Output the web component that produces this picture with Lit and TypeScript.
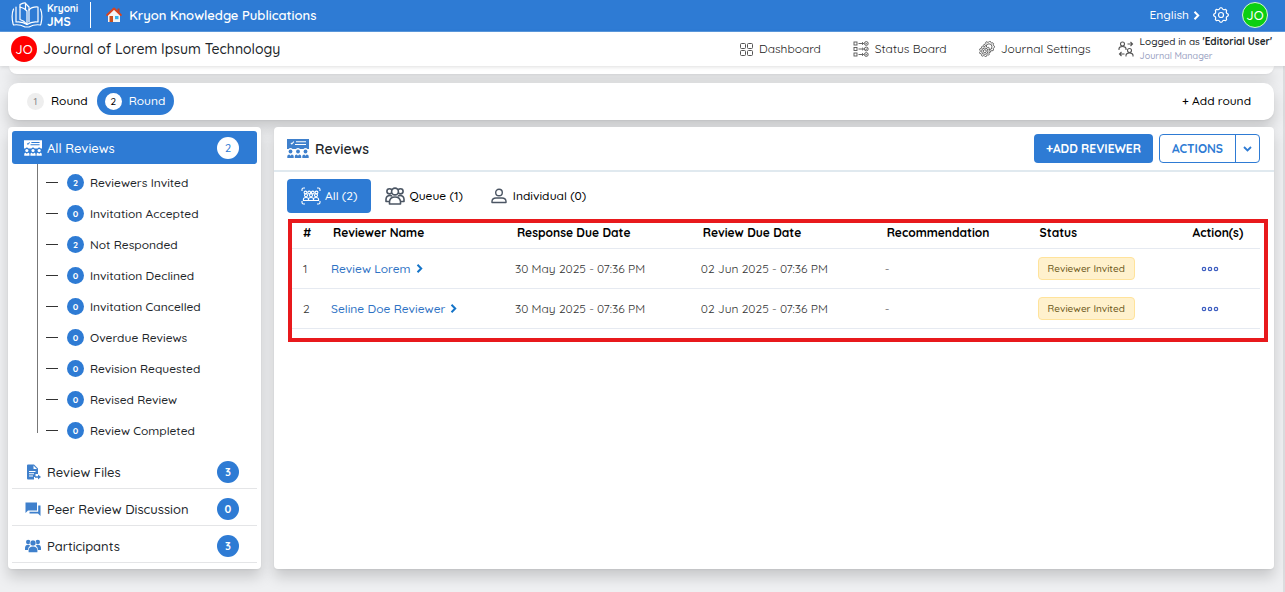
import { LitElement, html, css, svg } from "lit";
import { customElement } from "lit/decorators.js";
import { classMap } from "lit/directives/class-map.js";

/* ---------- icons ---------- */

const reviewBoard = (cls: string) => html`<svg class=${cls} viewBox="0 0 22 19" fill="currentColor" aria-hidden="true">
  <path fill-rule="evenodd" d="M0 0h22v10h-1.500a2.600 2.600 0 0 0-4 0h-3.500a2.600 2.600 0 0 0-4 0H5.500a2.600 2.600 0 0 0-4 0H0zM3.500 4.200l1.300 1.500 2.400-2.700-.8-.7-1.600 1.900-.5-.7zM9 2.200v1.100h10V2.200zM8 5v1.100h11V5z"/>
  ${[3.5, 11, 18.5].map((x) => svg`<circle cx=${x} cy="12.500" r="1.900"/><path d=${`M${x - 3.2} 19v-1.800q0-1.800 2-1.800l1.200 1.300 1.200-1.300q2 0 2 1.800V19z`}/>`)}
</svg>`;

const gearPath = (cx: number, cy: number, r: number, teeth = 8) => {
  const pts: string[] = [];
  for (let i = 0; i < teeth * 4; i++) {
    const a = ((i - 0.5) / (teeth * 4)) * Math.PI * 2;
    const q = i % 4 < 2 ? r : r * 0.82;
    pts.push(`${(cx + q * Math.cos(a)).toFixed(2)} ${(cy + q * Math.sin(a)).toFixed(2)}`);
  }
  return `M${pts.join("L")}Z`;
};

const gearIcon = html`<svg class="i16" viewBox="0 0 16 16" fill="none" stroke="currentColor" stroke-width="1.200" stroke-linejoin="round" aria-hidden="true">
  <path d=${gearPath(8, 8, 7.3)} /><circle cx="8" cy="8" r="2.500" /></svg>`;

const gearsIcon = html`<svg class="i16" viewBox="0 0 16 16" fill="none" stroke="currentColor" stroke-width="0.900" stroke-linejoin="round" aria-hidden="true">
  <path d=${gearPath(10, 5.8, 5.6, 9)} /><circle cx="10" cy="5.800" r="3" />
  <path fill="#fff" d=${gearPath(5.8, 10.2, 5.5, 9)} /><circle cx="5.800" cy="10.200" r="3.200" /><circle cx="5.800" cy="10.200" r="1.500" /></svg>`;

const chevron = html`<svg class="chev" viewBox="0 0 7 9" fill="none" stroke="currentColor" stroke-width="2" aria-hidden="true"><path d="M1.500 .8L5.200 4.500 1.500 8.200" /></svg>`;

const caret = html`<svg class="caret" viewBox="0 0 9 6" fill="none" stroke="currentColor" stroke-width="1.800" aria-hidden="true"><path d="M1 1l3.500 3.500L8 1" /></svg>`;

const bookIcon = html`<svg class="logo" viewBox="0 0 32 26" fill="none" stroke="currentColor" stroke-width="1.200" stroke-linejoin="round" stroke-linecap="round" aria-hidden="true">
  <path d="M5 5v15q6-1 11 2.500Q21 19 27 20V5q-6-.5-9 3" /><path d="M16 22.500V9Q13.500 6 9 5v12.500q4 1 7 5" />
  <path d="M9 5V2.500q3.500-2 5.500-1.500v6.300" /><path d="M18 20V5l-3.500-3.500" />
  <path d="M2.500 7Q0 13 2 21.500l.5 1.500q6-1 11.500 2h4q5.500-3 11.500-2l.5-1.500Q32 13 29.500 7" /></svg>`;

const houseIcon = html`<svg class="i16" viewBox="0 0 16 16" aria-hidden="true">
  <path fill="#f4f4f4" d="M2 7.500L8 2l6 5.500V15H2z" /><path fill="#c9401c" d="M11.500 1.500h2v4h-2z" />
  <path fill="none" stroke="#d9431e" stroke-width="2" stroke-linejoin="round" stroke-linecap="round" d="M1.200 8L8 1.600 14.800 8" />
  <path fill="#c8501e" d="M3.500 9h3.500v6H3.500z" /><path fill="#35b3ea" d="M9 9h3.500v3.200H9z" /></svg>`;

const dashboardIcon = html`<svg class="i13" viewBox="0 0 13 13" fill="none" stroke="currentColor" aria-hidden="true">
  ${[0.5, 7.5].flatMap((x) => [0.5, 7.5].map((y) => svg`<rect x=${x} y=${y} width="5" height="5" rx="1"/>`))}</svg>`;

const statusIcon = html`<svg class="i16" viewBox="0 0 16 16" fill="none" stroke="currentColor" stroke-width="0.900" aria-hidden="true">
  ${[2.5, 8, 13.5].map((y) => svg`<rect x="1" y=${y - 1.5} width="3" height="3"/><path d=${`M5.500 ${y}h5M9 ${y - 1.3}l1.500 1.300L9 ${y + 1.3}`}/><circle cx="13.300" cy=${y} r="1.900"/><path d=${`M12.500 ${y}l.7.7 1-1.400`}/>`)}</svg>`;

const switchIcon = html`<svg class="i16" viewBox="0 0 16 16" fill="none" stroke="currentColor" stroke-width="1.100" aria-hidden="true">
  <circle cx="4.500" cy="3" r="2" /><path d="M1 9V7.500q.5-2 3.500-2t3.500 2V9M9.500 3h5M12.500 1l2 2-2 2" />
  <circle cx="11.500" cy="9.500" r="2" /><path d="M8 15.500V14q.5-2 3.500-2t3.500 2v1.500M6.500 13h-5M3.500 11l-2 2 2 2" /></svg>`;

const fileIcon = html`<svg class="i16" viewBox="0 0 16 16" fill="currentColor" aria-hidden="true">
  <path fill-rule="evenodd" d="M2 1.500Q2 .5 3 .5h6L13 4.500V10h-2.500v3H9v2.500H3q-1 0-1-1zM8.500 1.500V5H12zM4 7v1h6.500V7zM4 9.300v1h5v-1zM4 11.600v1h4v-1z" />
  <path d="M10 12.300h3V10.500l3 2.500-3 2.500v-1.800h-3z" /></svg>`;

const chatIcon = html`<svg class="i16" viewBox="0 0 16 16" fill="currentColor" aria-hidden="true">
  <path d="M.5 1.500h11.500v8H3L.5 12z" /><path d="M13.200 4.500h2.300V15L13 12.500H4.500v-1.800h8.700z" /></svg>`;

const peopleIcon = html`<svg class="i16" viewBox="0 0 16 16" fill="currentColor" aria-hidden="true">
  <circle cx="3.200" cy="4" r="2.200" /><circle cx="12.800" cy="4" r="2.200" /><circle cx="8" cy="5" r="3" stroke="#fff" stroke-width="0.600" />
  <path d="M0 12V9.800Q.3 7 3 6.800q1.500 0 2.200 1Q3 9.300 3 12zM16 12V9.800Q15.700 7 13 6.800q-1.500 0-2.200 1Q13 9.300 13 12zM3.600 14.200V12Q4 8.600 8 8.500q4 .1 4.400 3.500v2.200z" /></svg>`;

const person = (x: number, y: number, s: number) =>
  svg`<circle cx=${x} cy=${y} r=${2.3 * s}/><path d=${`M${x - 4 * s} ${y + 8 * s}v${-1.6 * s}q0-${3 * s} ${4 * s}-${3 * s}t${4 * s} ${3 * s}v${1.6 * s}z`}/>`;

const allIcon = html`<svg class="i20" viewBox="0 0 20 18" fill="none" stroke="currentColor" stroke-width="1.100" aria-hidden="true">
  <path d="M1 4V2.500Q1 1 2.500 1H4M16 1h1.500Q19 1 19 2.500V4M1 14v1.500Q1 17 2.500 17H4M16 17h1.500q1.500 0 1.500-1.500V14" />
  ${[4.5, 8.2, 11.8, 15.5].map((x) => svg`<circle cx=${x} cy="5.500" r="1.400"/>`)}
  ${[5, 10, 15].map((x) => person(x, 8.3, 0.65))}</svg>`;

const queueIcon = html`<svg class="i20" viewBox="0 0 20 18" fill="none" stroke="currentColor" stroke-width="1.600" stroke-linejoin="round" aria-hidden="true">
  <circle cx="4.500" cy="4.300" r="2.600" /><circle cx="15.500" cy="4.300" r="2.600" /><circle cx="10" cy="4.500" r="3.400" fill="#fff" />
  <path d="M4 14.500H1V12q.5-3.500 4-3.500 1.500 0 2 .8M16 14.500h3V12q-.5-3.500-4-3.500-1.500 0-2 .8M4.500 17v-2.500q.5-4.500 5.500-4.500t5.500 4.500V17z" /></svg>`;

const personIcon = html`<svg class="i16" viewBox="0 0 16 16" fill="none" stroke="currentColor" stroke-width="1.400" stroke-linejoin="round" aria-hidden="true">
  <circle cx="8" cy="4.500" r="3.300" /><path d="M1 14.500v-1.200Q1.200 10 5 10h6q3.800 0 4 3.300v1.200z" /></svg>`;

const dotsIcon = html`<svg class="dots" viewBox="0 0 18 6" fill="none" stroke="currentColor" stroke-width="1.200" aria-hidden="true">
  <circle cx="3" cy="3" r="1.700" /><circle cx="9" cy="3" r="1.700" /><circle cx="15" cy="3" r="1.700" /></svg>`;

/* ---------- data ---------- */

const statuses: [string, number][] = [
  ["Reviewers Invited", 2],
  ["Invitation Accepted", 0],
  ["Not Responded", 2],
  ["Invitation Declined", 0],
  ["Invitation Cancelled", 0],
  ["Overdue Reviews", 0],
  ["Revision Requested", 0],
  ["Revised Review", 0],
  ["Review Completed", 0],
];

const sections = [
  { label: "Review Files", count: 3, icon: fileIcon },
  { label: "Peer Review Discussion", count: 0, icon: chatIcon },
  { label: "Participants", count: 3, icon: peopleIcon },
];

const tabs = [
  { label: "All (2)", icon: allIcon, on: true },
  { label: "Queue (1)", icon: queueIcon, on: false },
  { label: "Individual (0)", icon: personIcon, on: false },
];

const reviewers = ["Review Lorem", "Seline Doe Reviewer"];

@customElement("app-root")
export class AppRoot extends LitElement {
  static styles = css`
    :host {
      display: block;
      background: #eff0f2;
      color: #212529;
      font: 500 12px/20px Quicksand, Lato, "Noto Sans", sans-serif;
    }
    * { box-sizing: border-box; }
    svg { display: block; flex: none; }
    a { color: inherit; text-decoration: none; }
    button { font: inherit; color: inherit; background: none; border: 0; padding: 0; cursor: pointer; }
    h1, h2, ul { margin: 0; padding: 0; list-style: none; font: inherit; }

    .page { display: flex; flex-direction: column; min-height: 100vh; border-right: 2px solid #dcdddf; }
    .i13 { width: 13px; height: 13px; }
    .i16 { width: 16px; height: 16px; }
    .i20 { width: 20px; height: 18px; }
    .chev { width: 7px; height: 9px; }
    .caret { width: 9px; height: 6px; }
    .dots { width: 18px; height: 6px; }
    .board { width: 18px; height: 16px; }
    .board-lg { width: 22px; height: 19px; color: #3f80cc; }

    .top { display: flex; align-items: center; height: 32px; margin-right: -2px; padding: 0 17px 1px 11px; background: #2e7bd4; color: #fff; border-bottom: 1px solid #5c9be2; }
    .brand { display: flex; align-items: center; gap: 4px; height: 26px; padding-right: 12px; border-right: 1px solid #fff; font-size: 10px; line-height: 13px; font-weight: 700; }
    .brand b { display: block; font-size: 12px; }
    .logo { width: 32px; height: 26px; }
    .home { display: flex; align-items: center; gap: 7px; margin-left: 15px; font-size: 13px; font-weight: 600; }
    .tools { display: flex; align-items: center; gap: 13px; margin-left: auto; }
    .lang { display: flex; align-items: center; gap: 4px; }
    .avatar { display: grid; place-items: center; width: 26px; height: 26px; border-radius: 50%; color: #fff; font-size: 13px; }
    .green { background: #0bcf12; border: 1px solid #d6f5d8; }
    .red { background: #f00; }

    .bar { display: flex; align-items: center; height: 34px; margin-right: -2px; padding: 0 13px 0 11px; background: #fff; box-shadow: 0 1px 4px #0002; z-index: 1; }
    .journal { margin-left: 6px; font-size: 14px; }
    .nav { display: flex; align-items: center; gap: 32px; margin-left: auto; }
    .link { display: flex; align-items: center; gap: 6px; color: #222; font-weight: 400; }
    .link svg, .who svg { color: #555; }
    .who { display: flex; align-items: center; gap: 6px; margin-left: 27px; font-size: 10px; line-height: 14px; }
    .who small { display: block; color: #9aa2c2; font-size: 9px; }

    .content { display: flex; flex-direction: column; flex: 1; padding: 0 9px 23px 8px; }
    .sheet, .rounds, .side, .main { background: #fff; box-shadow: 0 8px 14px #0000002b, 0 1px 2px #0000000d; }
    .sheet { height: 8px; margin-left: 1px; border-radius: 0 0 12px 12px; }
    .rounds { display: flex; align-items: center; height: 37px; margin-top: 9px; padding: 0 23px 1px 11px; border-radius: 10px; color: #000; }
    .round { display: flex; align-items: center; gap: 7px; height: 28px; padding: 0 9px 0 8px; border-radius: 14px; }
    .round.on { background: #2e7bd4; color: #fff; }
    .dot { width: 17px; height: 17px; border-radius: 50%; background: #eee; color: #888; font-size: 10px; line-height: 17px; text-align: center; }
    .on .dot { background: #fff; color: #000; }
    .push { margin-left: auto; }

    .cols { display: flex; flex: 1; gap: 13px; margin-top: 7px; }
    .side, .main { border-radius: 4px; }
    .side { flex: none; width: 253px; padding: 4px; }
    .item { display: flex; align-items: center; gap: 5px; width: 100%; height: 37px; padding: 4px 18px 0 12px; border-bottom: 1px solid #e4e5e7; font-size: 13px; }
    .item svg { color: #3f80cc; }
    .item.on { height: 33px; padding-top: 0; border: 0; border-radius: 3px; background: #2e7bd4; color: #fff; }
    .item.on svg { color: #fff; }
    .item:not(.on) .i16 { margin: 0 1px; }
    .count { width: 22px; height: 22px; margin-left: auto; border-radius: 50%; background: #2e7bd4; color: #fff; font-size: 11px; line-height: 22px; font-weight: 700; text-align: center; }
    .on .count { background: #fff; color: #2e7bd4; font-weight: 500; }
    .tree { position: relative; padding: 3px 0 6px; }
    .tree::before { content: ""; position: absolute; left: 25px; top: 0; bottom: 19px; width: 1px; background: #777; }
    .leaf { display: flex; align-items: center; height: 31px; padding-left: 34px; }
    .leaf::before { content: ""; width: 12px; height: 1px; background: #333; margin-right: 9px; }
    .pip { width: 17px; height: 17px; margin-right: 6px; border-radius: 50%; background: #2e7bd4; color: #fff; font-size: 9px; line-height: 17px; font-weight: 700; text-align: center; }

    .main { flex: 1; min-width: 0; }
    .head { display: flex; align-items: center; gap: 6px; height: 45px; padding: 0 14px 0 13px; border-bottom: 2px solid #e0e9ef; }
    .head h2 { font-size: 14px; font-weight: 600; }
    .add, .split { height: 29px; border-radius: 4px; font-weight: 700; }
    .add { margin-left: auto; padding: 0 12px; background: #2e7bd4; color: #fff; }
    .split { display: flex; border: 1px solid #2e7bd4; color: #2e7bd4; }
    .split button { padding: 0 12px; }
    .split .more { padding: 0 7px; border-left: 1px solid #2e7bd4; }
    .tabs { display: flex; padding: 7px 13px 6px; }
    .tab { display: flex; align-items: center; gap: 4px; height: 34px; padding: 0 14px; border-radius: 4px; color: #000; }
    .tab svg { color: #4b5563; }
    .tab .i16 { margin-right: 2px; }
    .tab.on { background: #2e7bd4; color: #fff; }
    .tab.on svg { color: #fff; }
    .frame { margin: 0 6px 0 14px; padding: 0 4px 9px 0; border: 4px solid #e8191c; }
    table { width: 100%; table-layout: fixed; border-collapse: collapse; }
    th, td { padding: 0 0 0 9px; text-align: left; white-space: nowrap; border-bottom: 1px solid #e6eaf1; }
    th { height: 25px; padding: 0 0 5px 11px; color: #000; font-weight: 700; }
    td { height: 40px; color: #333; font-weight: 400; }
    td:first-child { padding-left: 11px; }
    .c-n { width: 30px; } .c-w { width: 19%; } .c-x { width: 19.2%; } .c-m { width: 15.8%; }
    .name { display: inline-flex; align-items: center; gap: 5px; color: #2e72c4; font-weight: 500; }
    .name .chev { color: #1474c8; }
    .chip { display: inline-block; padding: 0 9px; border: 1px solid #ffe39b; border-radius: 4px; background: #fff1cd; color: #6b5717; font-size: 10px; line-height: 21px; font-weight: 500; vertical-align: middle; }
    .dots-btn { display: block; margin-left: 10px; color: #3b5cc0; }
  `;

  render() {
    return html`<div class="page">
      <header class="top">
        <a class="brand" href="#">${bookIcon}<span>Kryoni<b>JMS</b></span></a>
        <a class="home" href="#">${houseIcon}Kryon Knowledge Publications</a>
        <div class="tools">
          <button class="lang">English ${chevron}</button>
          <button aria-label="Settings">${gearIcon}</button>
          <button class="avatar green" aria-label="Account">JO</button>
        </div>
      </header>
      <div class="bar">
        <span class="avatar red">JO</span>
        <h1 class="journal">Journal of Lorem Ipsum Technology</h1>
        <nav class="nav">
          <a class="link" href="#">${dashboardIcon}Dashboard</a>
          <a class="link" href="#">${statusIcon}Status Board</a>
          <a class="link" href="#">${gearsIcon}Journal Settings</a>
        </nav>
        <div class="who">${switchIcon}<div>Logged in as <b>'Editorial User'</b><small>Journal Manager</small></div></div>
      </div>
      <div class="content">
        <div class="sheet"></div>
        <div class="rounds">
          <button class="round"><span class="dot">1</span>Round</button>
          <button class="round on"><span class="dot">2</span>Round</button>
          <button class="push">+ Add round</button>
        </div>
        <div class="cols">
          <aside class="side">
            <a class="item on" href="#">${reviewBoard("board")}All Reviews<span class="count">2</span></a>
            <ul class="tree">
              ${statuses.map(([label, n]) => html`<li><a class="leaf" href="#"><span class="pip">${n}</span>${label}</a></li>`)}
            </ul>
            ${sections.map((s) => html`<a class="item" href="#">${s.icon}${s.label}<span class="count">${s.count}</span></a>`)}
          </aside>
          <main class="main">
            <div class="head">
              ${reviewBoard("board-lg")}
              <h2>Reviews</h2>
              <button class="add">+ADD REVIEWER</button>
              <div class="split"><button>ACTIONS</button><button class="more" aria-label="More actions">${caret}</button></div>
            </div>
            <div class="tabs">
              ${tabs.map((t) => html`<button class=${classMap({ tab: true, on: t.on })}>${t.icon}${t.label}</button>`)}
            </div>
            <div class="frame">
              <table>
                <thead>
                  <tr>
                    <th class="c-n">#</th><th class="c-w">Reviewer Name</th><th class="c-x">Response Due Date</th><th class="c-w">Review Due Date</th>
                    <th class="c-m">Recommendation</th><th class="c-m">Status</th><th>Action(s)</th>
                  </tr>
                </thead>
                <tbody>
                  ${reviewers.map((name, i) => html`<tr>
                    <td>${i + 1}</td>
                    <td><a class="name" href="#">${name}${chevron}</a></td>
                    <td>30 May 2025 - 07:36 PM</td>
                    <td>02 Jun 2025 - 07:36 PM</td>
                    <td>-</td>
                    <td><span class="chip">Reviewer Invited</span></td>
                    <td><button class="dots-btn" aria-label="Row actions">${dotsIcon}</button></td>
                  </tr>`)}
                </tbody>
              </table>
            </div>
          </main>
        </div>
      </div>
    </div>`;
  }
}
